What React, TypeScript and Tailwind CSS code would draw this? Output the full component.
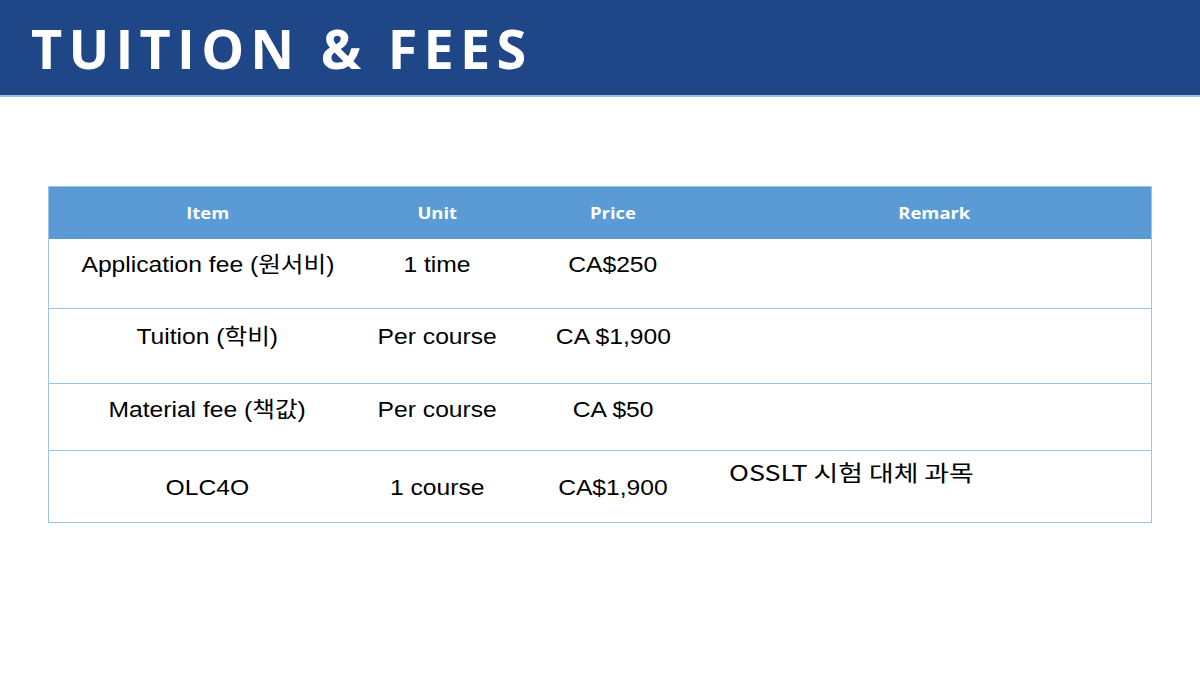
import React from 'react';

const rows = [
  { item: 'Application fee (원서비)', unit: '1 time', price: 'CA$250', remark: '', h: 'h-[69px]', pt: 'pt-[12px]' },
  { item: 'Tuition (학비)', unit: 'Per course', price: 'CA $1,900', remark: '', h: 'h-[75px]', pt: 'pt-[14px]' },
  { item: 'Material fee (책값)', unit: 'Per course', price: 'CA $50', remark: '', h: 'h-[67px]', pt: 'pt-[12px]' },
  { item: 'OLC4O', unit: '1 course', price: 'CA$1,900', remark: 'OSSLT 시험 대체 과목', h: 'h-[72px]', pt: 'pt-[23px]' },
];

const cell = "inline-block scale-x-[1.12] text-[22px] leading-[28px] text-black font-['Liberation_Sans','Noto_Sans_CJK_KR',sans-serif]";
const head = "inline-block scale-x-[1.15]";

export default function App() {
  return (
    <div className="w-[1200px] h-[675px] bg-white overflow-hidden">
      <div className="h-[97px] bg-[#1f4788] border-b-2 border-[#9dbfe0] flex items-center pl-[31px]">
        <h1 className="text-[54px] font-bold tracking-[0.115em] text-white font-['Open_Sans',sans-serif] leading-none">
          TUITION &amp; FEES
        </h1>
      </div>

      <div className="mt-[89px] mx-[48px] w-[1104px] border border-[#9dc3e6]">
        <div className="grid grid-cols-[317px_142px_210px_1fr] h-[52px] bg-[#5b9bd5] items-center text-white text-[16px] font-bold font-['Open_Sans',sans-serif]">
          <div className="text-center"><span className={head}>Item</span></div>
          <div className="text-center"><span className={head}>Unit</span></div>
          <div className="text-center"><span className={head}>Price</span></div>
          <div className="text-center"><span className={head}>Remark</span></div>
        </div>
        {rows.map((r, i) => (
          <div
            key={i}
            className={`grid grid-cols-[317px_142px_210px_1fr] ${r.h} ${i > 0 ? 'border-t border-[#9dc3e6]' : ''}`}
          >
            <div className={`text-center ${r.pt}`}><span className={cell}>{r.item}</span></div>
            <div className={`text-center ${r.pt}`}><span className={cell}>{r.unit}</span></div>
            <div className={`text-center ${r.pt}`}><span className={cell}>{r.price}</span></div>
            <div className="pl-[11px] pt-[5px]">
              {r.remark && (
                <span className="inline-block origin-left scale-x-[1.22] text-[22px] leading-[30px] text-black font-['Noto_Sans_CJK_KR','Noto_Sans',sans-serif]">
                  {r.remark}
                </span>
              )}
            </div>
          </div>
        ))}
      </div>
    </div>
  );
}
